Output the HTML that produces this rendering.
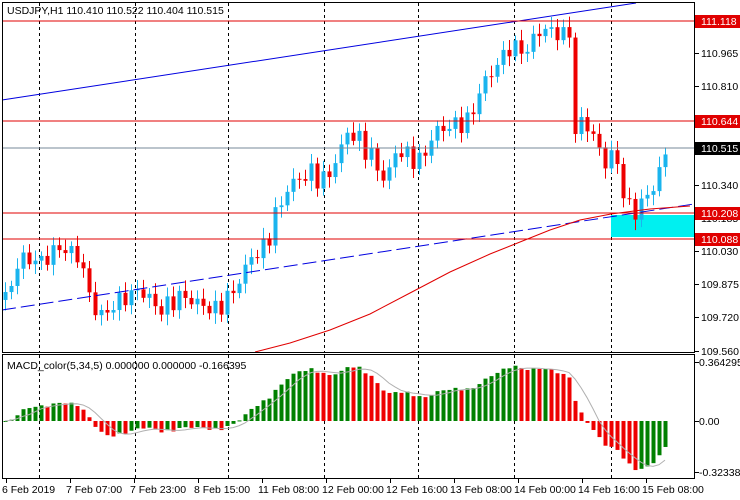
<!DOCTYPE html>
<html><head><meta charset="utf-8"><style>
html,body{margin:0;padding:0;background:#fff;width:740px;height:500px;overflow:hidden}
svg{display:block;font-family:"Liberation Sans",sans-serif;font-size:10.5px}
</style></head><body>
<svg id="s" width="740" height="500" xmlns="http://www.w3.org/2000/svg">
<rect width="740" height="500" fill="#fff"/>
<g id="grid" stroke="#000" stroke-dasharray="3,3" stroke-width="1"></g>
<rect x="611" y="215" width="83" height="22" fill="#00f0f0"/>
<g id="cand"></g>
<g id="macd"></g>
<line x1="2" y1="100" x2="636" y2="3" stroke="#0000e0" stroke-width="1"/>
<line x1="2" y1="310" x2="694" y2="204" stroke="#0000e0" stroke-width="1" stroke-dasharray="14,5"/>
<polyline fill="none" stroke="#e00000" stroke-width="1" points="255,352 290,343 330,330 370,314 410,293 450,272 490,254 520,242 550,230 580,220 611,214 650,209 690,206"/>
<line x1="2" y1="21" x2="694" y2="21" stroke="#e00000"/>
<line x1="2" y1="121" x2="694" y2="121" stroke="#e00000"/>
<line x1="2" y1="148" x2="694" y2="148" stroke="#778899"/>
<line x1="2" y1="213" x2="694" y2="213" stroke="#e00000"/>
<line x1="2" y1="239" x2="694" y2="239" stroke="#e00000"/>
<rect x="2.5" y="2.5" width="692" height="350" fill="none" stroke="#000"/>
<rect x="2.5" y="354.5" width="692" height="124" fill="none" stroke="#000"/>
<text x="7" y="14" fill="#000">USDJPY,H1  110.410 110.522 110.404 110.515</text>
<text x="7" y="369" fill="#000">MACD_color(5,34,5) 0.000000 0.000000 -0.166395</text>
<g fill="#000">
<text x="701" y="57">110.965</text><text x="701" y="90">110.810</text>
<text x="701" y="189">110.340</text><text x="701" y="222">110.185</text>
<text x="701" y="255">110.030</text><text x="701" y="288">109.875</text>
<text x="701" y="321">109.720</text><text x="701" y="355">109.560</text>
<text x="699" y="366">0.364295</text><text x="699" y="425">0.00</text><text x="699" y="476">-0.323388</text>
</g>
<g id="ticks" stroke="#000"></g>
<rect x="695" y="15" width="45" height="13" fill="#e00000"/><text x="701" y="25" fill="#fff">111.118</text>
<rect x="695" y="115" width="45" height="13" fill="#e00000"/><text x="701" y="125" fill="#fff">110.644</text>
<rect x="695" y="142" width="45" height="13" fill="#000"/><text x="701" y="152" fill="#fff">110.515</text>
<rect x="695" y="207" width="45" height="13" fill="#e00000"/><text x="701" y="217" fill="#fff">110.208</text>
<rect x="695" y="233" width="45" height="13" fill="#e00000"/><text x="701" y="243" fill="#fff">110.088</text>
<g fill="#000">
<text x="2" y="493">6 Feb 2019</text><text x="66" y="493">7 Feb 07:00</text><text x="130" y="493">7 Feb 23:00</text>
<text x="194" y="493">8 Feb 15:00</text><text x="258" y="493">11 Feb 08:00</text><text x="322" y="493">12 Feb 00:00</text>
<text x="386" y="493">12 Feb 16:00</text><text x="450" y="493">13 Feb 08:00</text><text x="514" y="493">14 Feb 00:00</text>
<text x="578" y="493">14 Feb 16:00</text><text x="642" y="493">15 Feb 08:00</text>
</g>
</svg>
<script>
var NS="http://www.w3.org/2000/svg";
function el(p,t,a){var e=document.createElementNS(NS,t);for(var k in a)e.setAttribute(k,a[k]);p.appendChild(e);return e;}
var g=document.getElementById('grid');
[39,135,228,324,418,514,611].forEach(function(x){el(g,'line',{x1:x+.5,y1:3,x2:x+.5,y2:352});el(g,'line',{x1:x+.5,y1:355,x2:x+.5,y2:478});});
var tk=document.getElementById('ticks');
[53,86,185,218,251,284,317,351,362,421,472].forEach(function(y){el(tk,'line',{x1:695,y1:y+.5,x2:699,y2:y+.5});});
[2,66,130,194,258,322,386,450,514,578,642].forEach(function(x){el(tk,'line',{x1:x+4.5,y1:479,x2:x+4.5,y2:483});});
function Y(p){return 21+(111.118-p)*211.65;}
var kp=[[5,109.80],[20,110.00],[40,109.98],[60,110.05],[80,110.0],[90,109.8],[100,109.72],[120,109.80],[140,109.85],[160,109.75],[180,109.82],[200,109.78],[215,109.75],[235,109.85],[250,110.0],[265,110.05],[275,110.2],[290,110.35],[310,110.40],[325,110.36],[340,110.5],[345,110.6],[360,110.55],[375,110.45],[385,110.35],[395,110.5],[410,110.48],[420,110.45],[435,110.6],[450,110.62],[470,110.65],[480,110.8],[495,110.9],[510,111.0],[525,110.97],[540,111.08],[560,111.06],[570,111.05],[575,110.6],[585,110.65],[595,110.55],[605,110.45],[615,110.5],[625,110.25],[635,110.22],[645,110.28],[655,110.35],[667,110.515]];
function P(x){for(var i=1;i<kp.length;i++){if(x<=kp[i][0]){var a=kp[i-1],b=kp[i];return a[1]+(b[1]-a[1])*(x-a[0])/(b[0]-a[0]);}}return kp[kp.length-1][1];}
var c=document.getElementById('cand'),prev=109.8,closes=[],xs=[];
for(var x=5;x<=667;x+=6){
 var n=Math.sin(x*1.7)*0.035+Math.sin(x*0.53)*0.02;
 var cl=P(x)+(x>660?0:n);var op=prev;
 var hi=Math.max(op,cl)+0.02+Math.abs(Math.sin(x*2.3))*0.03,lo=Math.min(op,cl)-0.02-Math.abs(Math.cos(x*1.9))*0.03;
 var col=cl>=op?'#1ab4ee':'#ee0000';
 el(c,'line',{x1:x+.5,y1:Y(hi),x2:x+.5,y2:Y(lo),stroke:col});
 var t=Y(Math.max(op,cl)),h=Math.max(1,Y(Math.min(op,cl))-t);
 el(c,'rect',{x:x-1.5,y:t,width:4,height:h,fill:col});
 prev=cl;closes.push(cl);xs.push(x);
}
var m=document.getElementById('macd');
function ema(arr,n){var k=2/(n+1),o=[],e=arr[0];arr.forEach(function(v){e=v*k+e*(1-k);o.push(e);});return o;}
var e5=ema(closes,5),e34=ema(closes,34),mc=[];
for(var i=0;i<closes.length;i++)mc.push(e5[i]-e34[i]);
var pts=[];
for(var i=0;i<mc.length;i++){
 var v=mc[i]*162,col=(i>0&&mc[i]<mc[i-1])?'#ee0000':'#008000';
 var y0=421,y1=421-v;if(y1<362)y1=362;if(y1>472)y1=472;
 el(m,'rect',{x:xs[i]-1.5,y:Math.min(y0,y1),width:4,height:Math.max(1,Math.abs(y1-y0)),fill:col});
 var s=0,c2=0;for(var j=Math.max(0,i-4);j<=i;j++){s+=mc[j];c2++;}
 pts.push(xs[i]+','+(421-s/c2*162));
}
el(m,'polyline',{points:pts.join(' '),fill:'none',stroke:'#b0b0b0'});
</script>
</body></html>
